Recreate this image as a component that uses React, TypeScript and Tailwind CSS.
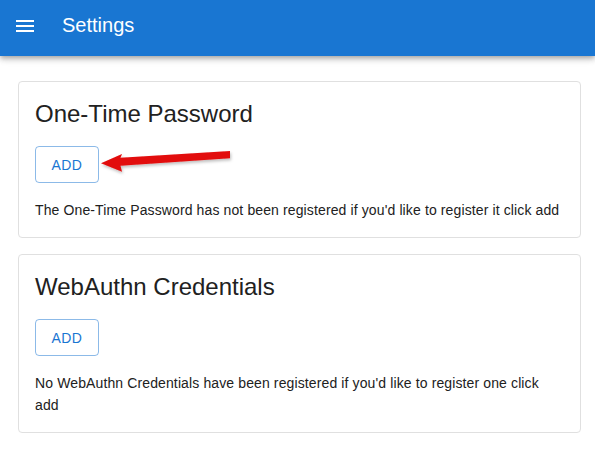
export default function App() {
  const sections = [
    {
      title: "One-Time Password",
      text: "The One-Time Password has not been registered if you'd like to register it click add",
      arrow: true,
    },
    {
      title: "WebAuthn Credentials",
      text: "No WebAuthn Credentials have been registered if you'd like to register one click add",
      arrow: false,
    },
  ];

  return (
    <div className="min-h-[464px] bg-white font-['Liberation_Sans',Arial,sans-serif] text-[#212121]">
      <header className="h-[56px] bg-[#1976d2] text-white shadow-[0_2px_4px_-1px_rgba(0,0,0,0.2),0_4px_5px_0_rgba(0,0,0,0.14),0_1px_10px_0_rgba(0,0,0,0.12)]">
        <div className="flex h-[50px] items-center pl-[13px]">
          <svg width="24" height="24" viewBox="0 0 24 24" fill="currentColor" className="mt-[2px]">
            <path d="M3 18h18v-2H3zm0-5h18v-2H3zm0-7v2h18V6z" />
          </svg>
          <h1 className="ml-[25px] text-[20px] leading-[32px] font-normal">Settings</h1>
        </div>
      </header>

      <main className="ml-[18px] mr-[14px] pt-[25px] flex flex-col gap-4">
        {sections.map((s) => (
          <section key={s.title} className="rounded border border-[#e0e0e0] bg-white p-4">
            <h2 className="text-[24px] leading-[32px] font-normal">{s.title}</h2>
            <div className="relative mt-4 h-[37px]">
              <button className="h-[37px] min-w-[64px] rounded border border-[rgba(25,118,210,0.5)] px-[15px] text-[14px] leading-[24px] tracking-[0.4px] text-[#1976d2] uppercase">
                Add
              </button>
              {s.arrow && (
                <svg
                  className="absolute left-[63px] top-0"
                  width="136"
                  height="30"
                  viewBox="0 0 136 30"
                >
                  <defs>
                    <filter id="arrowShadow" x="-10%" y="-30%" width="120%" height="180%">
                      <feDropShadow dx="1" dy="2" stdDeviation="1.5" floodColor="#000" floodOpacity="0.25" />
                    </filter>
                  </defs>
                  <polygon
                    points="3,17.3 24,8 22.5,11.7 132,5 132,12.3 22.5,19.7 24,25.7"
                    fill="#e20b0b"
                    filter="url(#arrowShadow)"
                  />
                </svg>
              )}
            </div>
            <p className="mt-4 text-[14px] leading-[22px] tracking-[0.12px]">{s.text}</p>
          </section>
        ))}
      </main>
    </div>
  );
}
